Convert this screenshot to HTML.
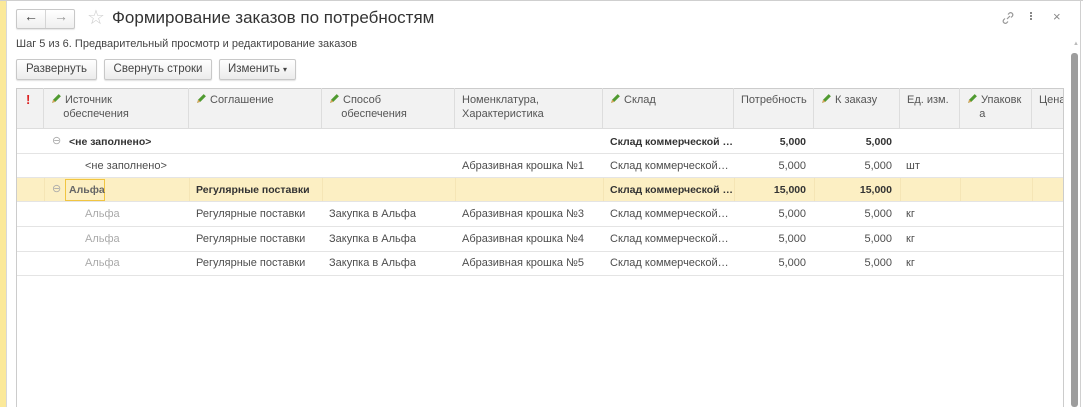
<!DOCTYPE html>
<html><head><meta charset="utf-8"><style>
*{box-sizing:border-box;margin:0;padding:0}
html,body{width:1083px;height:407px;overflow:hidden}
body{background:#fff;font-family:"Liberation Sans",Arial,sans-serif;font-size:11px;color:#4d4d4d;position:relative}
.abs{position:absolute}
.btn{position:absolute;top:59px;height:21px;border:1px solid #c8c8c8;border-radius:2px;background:linear-gradient(#fff,#ececec);font-size:11.5px;color:#444;text-align:center;line-height:19px;box-shadow:0 1px 1px rgba(0,0,0,.12)}
.hdr{position:absolute;top:88px;height:41px;background:#f2f2f2;border-bottom:1px solid #ddd;border-top:1px solid #ccc}
.hc{position:absolute;top:88px;height:41px;border-right:1px solid #ddd;padding:5px 0 0 7px;line-height:14px;color:#555;font-size:11px}
.row{position:absolute;left:17px;width:1046px;border-bottom:1px solid #e4e4e4}
.c{position:absolute;white-space:nowrap;font-size:11px;line-height:12px}
.b{font-weight:bold;color:#333;font-size:10.5px}
.g{color:#aaa}
.r{text-align:right}
.pen{display:inline-block;width:11px;height:11px;vertical-align:-1px;margin-right:3px}
</style></head><body>
<div class="abs" style="left:0;top:0;width:6px;height:407px;background:#fbe99a"></div>
<div class="abs" style="left:6px;top:0;width:1px;height:407px;background:#d8d8d8"></div>
<div class="abs" style="left:0;top:0;width:1083px;height:1px;background:#cfcfcf"></div>
<div class="abs" style="left:1080px;top:0;width:1px;height:407px;background:#d0d0d0"></div>
<!-- nav -->
<div class="abs" style="left:16px;top:9px;width:59px;height:20px;border:1px solid #c8c8c8;border-radius:2px;background:linear-gradient(#fff,#efefef);box-shadow:0 1px 1px rgba(0,0,0,.1)"></div>
<div class="abs" style="left:45px;top:10px;width:1px;height:18px;background:#d5d5d5"></div>
<div class="abs" style="left:24px;top:8px;font-size:14px;color:#444">&#8592;</div>
<div class="abs" style="left:54px;top:8px;font-size:14px;color:#999">&#8594;</div>
<div class="abs" style="left:87px;top:5px;font-size:20px;color:#ccc">&#9734;</div>
<div class="abs" style="left:112px;top:8px;font-size:17px;color:#333">Формирование заказов по потребностям</div>
<svg class="abs" style="left:1000px;top:10px" width="16" height="16" viewBox="0 0 16 16"><g fill="none" stroke="#999" stroke-width="1.2"><path d="M7 9l3-3"/><path d="M8 4.5l1.5-1.5a2.2 2.2 0 013 3L11 7.5"/><path d="M8 11.5L6.5 13a2.2 2.2 0 01-3-3L5 8.5"/></g></svg>
<div class="abs" style="left:1030px;top:12px;width:2px;height:2px;background:#888;box-shadow:0 3px #888,0 6px #888"></div>
<div class="abs" style="left:1053px;top:9px;font-size:13px;color:#888">×</div>
<div class="abs" style="left:16px;top:38px;font-size:11px;color:#444">Шаг 5 из 6. Предварительный просмотр и редактирование заказов</div>
<div class="btn" style="left:16px;width:81px">Развернуть</div>
<div class="btn" style="left:104px;width:108px">Свернуть строки</div>
<div class="btn" style="left:219px;width:77px">Изменить <span style="font-size:8px">▾</span></div>
<!-- scrollbar -->
<div class="abs" style="left:1073px;top:41px;font-size:6px;color:#bbb">▲</div>
<div class="abs" style="left:1071px;top:53px;width:7px;height:354px;background:#9d9d9d;border-radius:3px"></div>
<!-- table -->
<div class="abs" style="left:16px;top:88px;width:1048px;height:330px;border:1px solid #ccc;background:#fff"></div>
<div class="hdr" style="left:17px;width:1046px"></div>
<svg width="0" height="0" style="position:absolute"><defs><symbol id="p" viewBox="0 0 10 10"><path d="M1 9l1-3 5-5 2 2-5 5z" fill="#4f9a30"/><path d="M1 9l1-3 2 2z" fill="#d9a35a"/></symbol></defs></svg>
<div class="hc" style="left:17px;width:27px;color:#d22;font-weight:bold;font-size:13px;padding-left:9px">!</div>
<div class="hc" style="left:44px;width:145px"><svg class="pen"><use href="#p"/></svg>Источник<br>&nbsp;&nbsp;&nbsp;&nbsp;обеспечения</div>
<div class="hc" style="left:189px;width:133px"><svg class="pen"><use href="#p"/></svg>Соглашение</div>
<div class="hc" style="left:322px;width:133px"><svg class="pen"><use href="#p"/></svg>Способ<br>&nbsp;&nbsp;&nbsp;&nbsp;обеспечения</div>
<div class="hc" style="left:455px;width:148px">Номенклатура,<br>Характеристика</div>
<div class="hc" style="left:603px;width:131px"><svg class="pen"><use href="#p"/></svg>Склад</div>
<div class="hc" style="left:734px;width:80px">Потребность</div>
<div class="hc" style="left:814px;width:86px"><svg class="pen"><use href="#p"/></svg>К заказу</div>
<div class="hc" style="left:900px;width:60px">Ед. изм.</div>
<div class="hc" style="left:960px;width:72px"><svg class="pen"><use href="#p"/></svg>Упаковк<br>&nbsp;&nbsp;&nbsp;&nbsp;а</div>
<div class="hc" style="left:1032px;width:31px;border-right:none;overflow:hidden">Цена</div>

<div class="row" style="top:129px;height:25px"></div>
<div class="c" style="left:52px;top:135px;color:#aaa">⊖</div>
<div class="c b" style="left:69px;top:136px">&lt;не заполнено&gt;</div>
<div class="c b" style="left:610px;top:136px">Склад коммерческой …</div>
<div class="c b r" style="left:734px;top:136px;width:72px">5,000</div>
<div class="c b r" style="left:814px;top:136px;width:78px">5,000</div>

<div class="row" style="top:154px;height:24px"></div>
<div class="c" style="left:85px;top:160px">&lt;не заполнено&gt;</div>
<div class="c" style="left:462px;top:160px">Абразивная крошка №1</div>
<div class="c" style="left:610px;top:160px">Склад коммерческой…</div>
<div class="c r" style="left:734px;top:160px;width:72px">5,000</div>
<div class="c r" style="left:814px;top:160px;width:78px">5,000</div>
<div class="c" style="left:906px;top:160px">шт</div>

<div class="row" style="top:178px;height:24px;background:#fcefc3"></div>
<div class="abs" style="left:44px;top:178px;width:1px;height:23px;background:#f5e5b5;box-shadow:145px 0 #f5e5b5,278px 0 #f5e5b5,411px 0 #f5e5b5,559px 0 #f5e5b5,690px 0 #f5e5b5,770px 0 #f5e5b5,856px 0 #f5e5b5,916px 0 #f5e5b5,988px 0 #f5e5b5"></div>
<div class="c" style="left:52px;top:183px;color:#aaa">⊖</div>
<div class="abs" style="left:65px;top:179px;width:40px;height:22px;border:1px solid #f1c541"></div>
<div class="c b" style="left:69px;top:184px;color:#666">Альфа</div>
<div class="c b" style="left:196px;top:184px">Регулярные поставки</div>
<div class="c b" style="left:610px;top:184px">Склад коммерческой …</div>
<div class="c b r" style="left:734px;top:184px;width:72px">15,000</div>
<div class="c b r" style="left:814px;top:184px;width:78px">15,000</div>

<div class="row" style="top:202px;height:25px"></div>
<div class="c g" style="left:85px;top:208px">Альфа</div>
<div class="c" style="left:196px;top:208px">Регулярные поставки</div>
<div class="c" style="left:329px;top:208px">Закупка в Альфа</div>
<div class="c" style="left:462px;top:208px">Абразивная крошка №3</div>
<div class="c" style="left:610px;top:208px">Склад коммерческой…</div>
<div class="c r" style="left:734px;top:208px;width:72px">5,000</div>
<div class="c r" style="left:814px;top:208px;width:78px">5,000</div>
<div class="c" style="left:906px;top:208px">кг</div>

<div class="row" style="top:227px;height:25px"></div>
<div class="c g" style="left:85px;top:233px">Альфа</div>
<div class="c" style="left:196px;top:233px">Регулярные поставки</div>
<div class="c" style="left:329px;top:233px">Закупка в Альфа</div>
<div class="c" style="left:462px;top:233px">Абразивная крошка №4</div>
<div class="c" style="left:610px;top:233px">Склад коммерческой…</div>
<div class="c r" style="left:734px;top:233px;width:72px">5,000</div>
<div class="c r" style="left:814px;top:233px;width:78px">5,000</div>
<div class="c" style="left:906px;top:233px">кг</div>

<div class="row" style="top:252px;height:24px"></div>
<div class="c g" style="left:85px;top:257px">Альфа</div>
<div class="c" style="left:196px;top:257px">Регулярные поставки</div>
<div class="c" style="left:329px;top:257px">Закупка в Альфа</div>
<div class="c" style="left:462px;top:257px">Абразивная крошка №5</div>
<div class="c" style="left:610px;top:257px">Склад коммерческой…</div>
<div class="c r" style="left:734px;top:257px;width:72px">5,000</div>
<div class="c r" style="left:814px;top:257px;width:78px">5,000</div>
<div class="c" style="left:906px;top:257px">кг</div>
</body></html>
